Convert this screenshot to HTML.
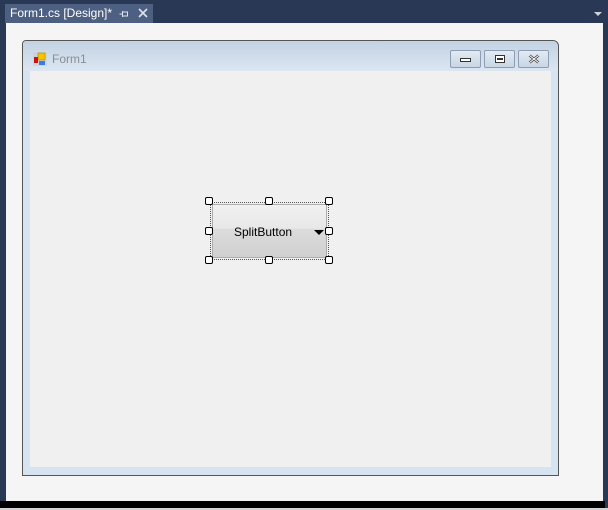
<!DOCTYPE html>
<html><head><meta charset="utf-8"><style>
*{margin:0;padding:0;box-sizing:border-box}
body{width:608px;height:510px;background:#293955;position:relative;overflow:hidden;font-family:"Liberation Sans",sans-serif}
.abs{position:absolute}
.tab{left:5px;top:4px;width:148px;height:19px;background:#4d6082;color:#fff;font-size:12px;line-height:19px;padding-left:5px;white-space:nowrap}
.content{left:6px;top:23px;width:597px;height:478px;background:#f5f5f5}
.form{left:22px;top:40px;width:537px;height:436px;border:1px solid #555;border-top-right-radius:6px;border-top-left-radius:4px;background:#d6e3f0}
.title{left:0;top:0;width:535px;height:30px;background:linear-gradient(#c3d2e2,#dbe6f1);border-top-right-radius:5px;border-top-left-radius:3px}
.client{left:7px;top:30px;width:521px;height:396px;background:#f0f0f0}
.tb{top:9px;height:18px;width:31px;border:1px solid #8d9db3;border-radius:2px;background:linear-gradient(#e2eaf3,#c9d6e5)}
.h{width:8px;height:8px;background:#fff;border:1px solid #000;border-radius:2px}
</style></head><body>
<div class="abs tab">Form1.cs [Design]*</div>
<svg class="abs" style="left:119px;top:9px" width="10" height="10" viewBox="0 0 10 10"><path d="M0.5 5H3.5M3.5 2V8M3.5 3H9M3.5 7H9M8.5 3V7" stroke="#dde3ec" stroke-width="1" fill="none"/></svg>
<svg class="abs" style="left:138px;top:8px" width="10" height="10" viewBox="0 0 10 10"><path d="M1 1L9 9M9 1L1 9" stroke="#dde3ec" stroke-width="1.6"/></svg>
<div class="abs" style="left:594px;top:12px;width:0;height:0;border-left:4px solid transparent;border-right:4px solid transparent;border-top:4px solid #ccd3df"></div>
<div class="abs content"></div>
<div class="abs form">
 <div class="abs title">
  <svg class="abs" style="left:10px;top:11px" width="14" height="14" viewBox="0 0 14 14"><rect x="0" y="0" width="14" height="14" fill="#c9c9c9" opacity=".5"/><rect x="5" y="1" width="7" height="7" fill="#f5c400" stroke="#b08800" stroke-width=".6"/><rect x="1" y="5" width="4" height="6" fill="#d01010"/><rect x="6" y="9" width="6" height="4" fill="#3a7de0"/></svg>
  <div class="abs" style="left:29px;top:11px;font-size:12px;color:#8a8f96">Form1</div>
  <div class="abs tb" style="left:427px"><div class="abs" style="left:9px;top:7px;width:11px;height:4px;border:1px solid #333;background:#fff"></div></div>
  <div class="abs tb" style="left:461px"><div class="abs" style="left:10px;top:4px;width:10px;height:8px;border:1px solid #333;background:#fff"></div><div class="abs" style="left:12px;top:7px;width:6px;height:2px;background:#333"></div></div>
  <div class="abs tb" style="left:495px"><svg class="abs" style="left:9px;top:3px" width="12" height="10" viewBox="0 0 12 10"><path d="M1.5 1.5L10.5 8.5M10.5 1.5L1.5 8.5" stroke="#444" stroke-width="2.6"/><path d="M1.5 1.5L10.5 8.5M10.5 1.5L1.5 8.5" stroke="#fff" stroke-width="1"/></svg></div>
 </div>
 <div class="abs client"></div>
</div>
<div class="abs" style="left:210px;top:202px;width:119px;height:58px;border:1px dotted #555"></div>
<div class="abs" style="left:212px;top:204px;width:115px;height:54px;border:1px solid #adadad;background:linear-gradient(#f0f0f0 0%,#e8e8e8 45%,#dcdcdc 46%,#d0d0d0 100%)">
 <div class="abs" style="left:21px;top:20px;font-size:12px;color:#000">SplitButton</div>
 <div class="abs" style="left:101px;top:25px;width:0;height:0;border-left:5px solid transparent;border-right:5px solid transparent;border-top:5px solid #000"></div>
</div>
<div class="abs h" style="left:205px;top:197px"></div><div class="abs h" style="left:265px;top:197px"></div><div class="abs h" style="left:325px;top:197px"></div>
<div class="abs h" style="left:205px;top:227px"></div><div class="abs h" style="left:325px;top:227px"></div>
<div class="abs h" style="left:205px;top:256px"></div><div class="abs h" style="left:265px;top:256px"></div><div class="abs h" style="left:325px;top:256px"></div>
<div class="abs" style="left:0;top:501px;width:605px;height:7px;background:#000"></div>
<div class="abs" style="left:0;top:508px;width:608px;height:2px;background:#d4d4d4"></div>
</body></html>
